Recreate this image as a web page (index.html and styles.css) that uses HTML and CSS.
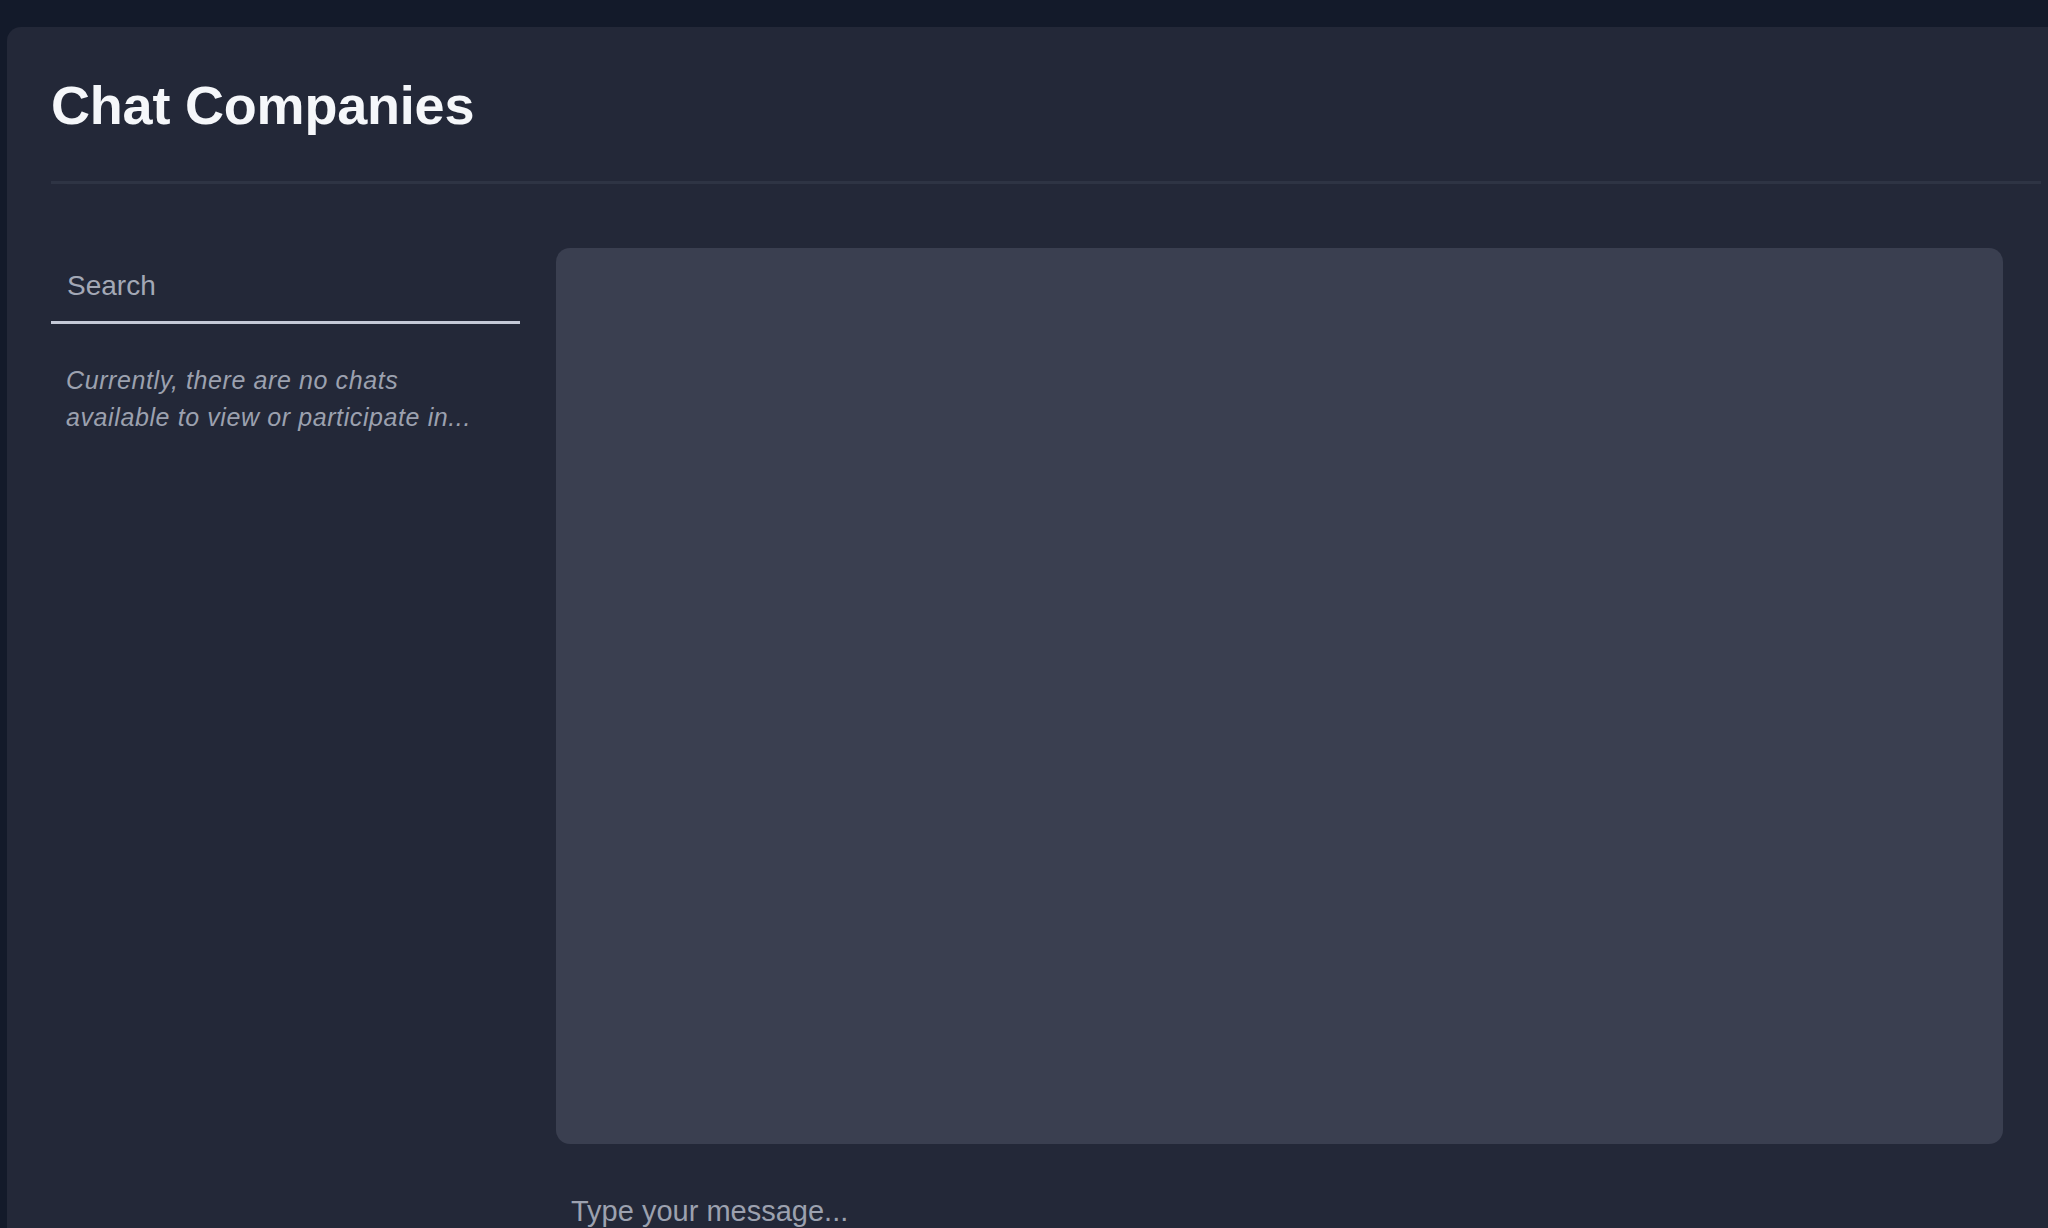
FILE: index.html
```html
<!DOCTYPE html>
<html lang="en">
<head>
<meta charset="utf-8">
<title>Chat Companies</title>
<link rel="stylesheet" href="styles.css">
</head>
<body>
  <div class="card">
    <h1 class="title">Chat Companies</h1>
    <div class="divider"></div>
    <div class="main">
      <aside class="sidebar">
        <div class="search" role="textbox"><span class="placeholder">Search</span></div>
        <p class="empty">Currently, there are no chats available to view or participate in...</p>
      </aside>
      <section class="chat">
        <div class="messages"></div>
        <div class="composer" role="textbox"><span class="placeholder">Type your message...</span></div>
      </section>
    </div>
  </div>
</body>
</html>
```
FILE: styles.css
```css
html, body {
  margin: 0;
  padding: 0;
  height: 100%;
  overflow: hidden;
}
body {
  background: #131a2a;
  font-family: "Liberation Sans", Arial, sans-serif;
  padding: 27px 0 0 7px;
  box-sizing: border-box;
}
.card {
  background: #232838;
  border-radius: 14px 0 0 0;
  padding: 51px 7px 0 44px;
  height: 100%;
  box-sizing: border-box;
}
.title {
  margin: 0;
  font-size: 54px;
  line-height: 54px;
  font-weight: 700;
  color: #f5f7fa;
  letter-spacing: -0.2px;
}
.divider {
  margin-top: 49px;
  height: 3px;
  background: #2e3444;
}
.main {
  display: flex;
  gap: 36px;
  margin-top: 64px;
  padding-right: 38px;
}
.sidebar {
  width: 469px;
  flex: none;
}
.search {
  padding: 22px 16px 0;
  box-sizing: content-box;
  height: 51px;
  border-bottom: 3px solid #c4c9d7;
}
.placeholder {
  font-size: 28px;
  line-height: 32px;
  color: #a3a8b6;
  display: block;
}
.empty {
  margin: 38px 0 0;
  padding: 0 15px;
  font-size: 25px;
  line-height: 37px;
  font-style: italic;
  letter-spacing: 0.6px;
  color: #9ca1af;
}
.chat {
  flex: 1;
  display: flex;
  flex-direction: column;
}
.messages {
  height: 896px;
  background: #3a3f50;
  border-radius: 14px;
}
.composer {
  margin-top: 24px;
  padding: 27px 15px 0;
}
.composer .placeholder {
  font-size: 29px;
  line-height: 33px;
  color: #9ca1af;
}
```
